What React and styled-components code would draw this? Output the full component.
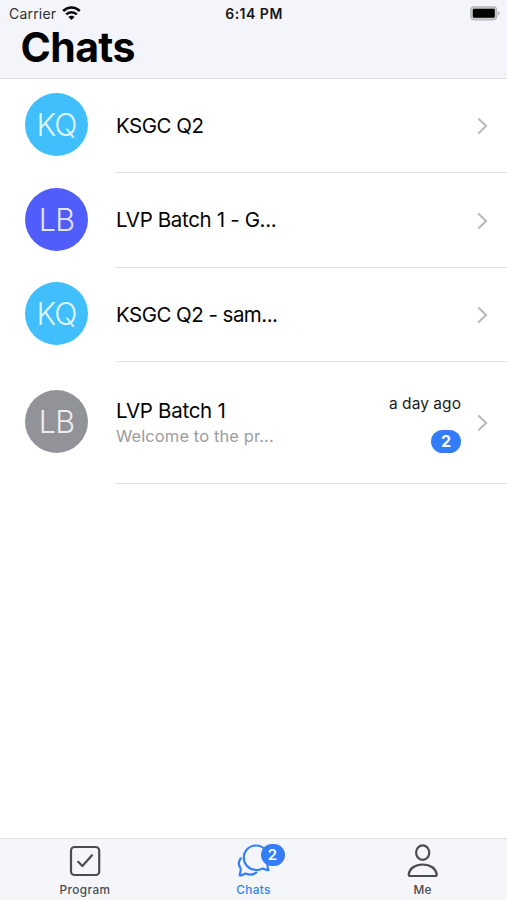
import React from "react";
import styled, { createGlobalStyle } from "styled-components";

const GlobalStyle = createGlobalStyle`
  * { box-sizing: border-box; }
  body { margin: 0; background: #fff; }
`;

const Screen = styled.div`
  width: 507px;
  height: 900px;
  display: flex;
  flex-direction: column;
  overflow: hidden;
  background: #fff;
  color: #050505;
  font-family: Inter, "Liberation Sans", sans-serif;
  white-space: nowrap;
`;

const Header = styled.header`
  height: 79px;
  flex: none;
  background: #f4f5fa;
  border-bottom: 1px solid #dddee2;
`;

const StatusBar = styled.div`
  height: 27px;
  padding: 0 7px 0 9px;
  display: grid;
  grid-template-columns: 1fr auto 1fr;
  align-items: center;
  line-height: 27px;
`;

const Carrier = styled.div`
  display: flex;
  align-items: center;
  gap: 6px;
  font-size: 14px;
  letter-spacing: 0.2px;
  color: #303135;
`;

const Clock = styled.div`
  font-size: 14px;
  font-weight: 600;
  letter-spacing: 0.5px;
  margin-right: 1px;
  color: #161719;
`;

const Battery = styled.svg`
  display: block;
  justify-self: end;
`;

const Title = styled.h1`
  margin: 0;
  padding-left: 20.5px;
  font-size: 41px;
  font-weight: 700;
  line-height: 40px;
  letter-spacing: -0.6px;
  color: #000;
`;

const List = styled.main`
  flex: 1;
`;

const Row = styled.div`
  height: ${(p) => p.$height}px;
  padding-left: 25px;
  display: flex;
  align-items: stretch;
`;

const Avatar = styled.div`
  width: 63px;
  height: 63px;
  flex: none;
  margin: ${(p) => p.$top}px 28px 0 0;
  border-radius: 50%;
  background: ${(p) => p.$color};
  color: rgba(255, 255, 255, 0.86);
  font-size: 30.5px;
  font-weight: 300;
  line-height: 64px;
  letter-spacing: -0.8px;
  text-align: center;
`;

const Body = styled.div`
  flex: 1;
  display: flex;
  align-items: center;
  padding-right: 18px;
  border-bottom: 1px solid #e4e4e5;
`;

const Texts = styled.div`
  flex: 1;
  margin-top: ${(p) => p.$shift}px;
`;

const Name = styled.div`
  font-size: 20.5px;
  line-height: 26px;
  letter-spacing: ${(p) => p.$tracking}px;
`;

const Preview = styled.div`
  font-size: 16.5px;
  line-height: 25px;
  letter-spacing: 0.1px;
  color: #9c9c9e;
`;

const Meta = styled.div`
  display: flex;
  flex-direction: column;
  align-items: flex-end;
  gap: 16px;
  margin: 2px 16px 0 0;
`;

const Time = styled.div`
  font-size: 15.5px;
  line-height: 20px;
  letter-spacing: 0.05px;
  color: #1b1b1c;
`;

const Count = styled.div`
  width: 30px;
  height: 23px;
  border-radius: 12px;
  background: #337dfb;
  color: #fff;
  font-size: 16px;
  font-weight: 700;
  line-height: 23px;
  text-align: center;
`;

const Chevron = styled.svg`
  display: block;
  margin-top: ${(p) => p.$shift}px;
`;

const TabBar = styled.nav`
  height: 62px;
  flex: none;
  display: grid;
  grid-template-columns: repeat(3, 1fr);
  background: #f4f6fa;
  border-top: 1px solid #dfe0e3;
`;

const Tab = styled.div`
  display: flex;
  flex-direction: column;
  align-items: center;
  color: ${(p) => (p.$active ? "#347ff9" : "#4b4c4f")};
`;

const TabIcon = styled.div`
  position: relative;
  height: 43px;
  padding-top: 4px;
  svg { display: block; }
`;

const TabLabel = styled.div`
  font-size: 11.8px;
  font-weight: 500;
  line-height: 16px;
  letter-spacing: ${(p) => p.$tracking}px;
  padding-left: ${(p) => p.$indent || 0}px;
`;

const TabBadge = styled.div`
  position: absolute;
  top: 5px;
  left: 24px;
  width: 24px;
  height: 22px;
  border-radius: 11px;
  background: #337dfb;
  color: #fff;
  font-size: 15px;
  font-weight: 600;
  line-height: 22px;
  text-align: center;
`;

const chats = [
  { initials: "KQ", color: "#40bffc", name: "KSGC Q2", height: 94, top: 14, tracking: -0.5 },
  { initials: "LB", color: "#505dfb", name: "LVP Batch 1 - G...", height: 95, top: 14.5, tracking: -0.35 },
  { initials: "KQ", color: "#40bffc", name: "KSGC Q2 - sam...", height: 94, top: 14, tracking: -0.53 },
  {
    initials: "LB", color: "#929299", name: "LVP Batch 1", height: 122, top: 28, tracking: -0.28,
    preview: "Welcome to the pr...", time: "a day ago", count: 2,
  },
];

function WifiIcon() {
  return (
    <svg width="19" height="15" viewBox="0 0 19 15" fill="none" stroke="#08090a" strokeWidth="2.5">
      <path d="M1.2 5C5.8.4 13.2.4 17.8 5" />
      <path d="M4.2 8.4C7.1 5.5 11.9 5.5 14.8 8.4" />
      <path d="M6.4 11C8.1 9.2 10.9 9.2 12.6 11L9.5 14.1Z" fill="#08090a" stroke="none" />
    </svg>
  );
}

function ProgramIcon() {
  return (
    <svg width="32" height="34" viewBox="0 0 32 34" fill="none" stroke="currentColor" strokeWidth="2.2" strokeLinecap="round" strokeLinejoin="round">
      <rect x="2" y="4" width="28.2" height="28" rx="3.6" />
      <path d="M9.2 18.8 13.4 23 23 12.2" />
    </svg>
  );
}

function ChatsIcon() {
  return (
    <svg width="34" height="36" viewBox="0 0.7 34 36" fill="none" stroke="currentColor" strokeWidth="2.2" strokeLinecap="round" strokeLinejoin="round">
      <path d="M30.5 19.5C31 22 29.8 24.6 31.4 27.8C28.4 28.2 27.1 25.8 25 26.3C22.8 27.5 20.5 28 18.2 27.6C11.6 27.2 6.8 21.9 6.8 15.4C6.8 8.6 12.2 3.2 19 3.2C25.8 3.2 31 8.6 31 15.4C31 16.8 30.9 18.2 30.5 19.5Z" />
      <path d="M3.8 16C1.5 18.8 1.4 22.8 3.5 26.1C4.3 28.2 3 29.7 2.7 33.2C5.6 33.5 7.2 30.8 9.3 31.4C12.8 32.9 16.9 32 19.2 30.4" />
    </svg>
  );
}

function PersonIcon() {
  return (
    <svg width="32" height="35" viewBox="0 0 32 35" fill="none" stroke="currentColor" strokeWidth="2.2" strokeLinejoin="round">
      <ellipse cx="15.7" cy="9.6" rx="6.6" ry="7.2" />
      <path d="M3.1 33C2.1 33 1.6 32.3 1.7 31.4C2.5 25.5 7.9 21.5 15.7 21.5S28.9 25.5 29.7 31.4C29.8 32.3 29.3 33 28.3 33Z" />
    </svg>
  );
}

function ChatRow({ chat }) {
  return (
    <Row $height={chat.height}>
      <Avatar $color={chat.color} $top={chat.top}>{chat.initials}</Avatar>
      <Body>
        <Texts $shift={chat.preview ? 2 : 0}>
          <Name $tracking={chat.tracking}>{chat.name}</Name>
          {chat.preview && <Preview>{chat.preview}</Preview>}
        </Texts>
        {chat.time && (
          <Meta>
            <Time>{chat.time}</Time>
            <Count>{chat.count}</Count>
          </Meta>
        )}
        <Chevron $shift={chat.preview ? 0 : 1} width="12" height="18" viewBox="0 0 12 18" fill="none" stroke="#bababd" strokeWidth="2.1">
          <path d="M1.3 1.5 9.1 9 1.3 16.5" />
        </Chevron>
      </Body>
    </Row>
  );
}

export default function App() {
  return (
    <Screen>
      <GlobalStyle />
      <Header>
        <StatusBar>
          <Carrier>Carrier <WifiIcon /></Carrier>
          <Clock>6:14 PM</Clock>
          <Battery width="30" height="15" viewBox="0 0 30 15">
            <rect x=".8" y=".8" width="26" height="13" rx="3.5" fill="#c9cacc" stroke="#b4b5b7" strokeWidth="1.2" />
            <rect x="2.8" y="2.8" width="22" height="9" rx="1.2" fill="#000" />
            <path d="M28.2 5.2C30.2 6 30.2 8.6 28.2 9.4Z" fill="#a3a4a8" />
          </Battery>
        </StatusBar>
        <Title>Chats</Title>
      </Header>
      <List>
        {chats.map((chat) => <ChatRow key={chat.name} chat={chat} />)}
      </List>
      <TabBar>
        <Tab>
          <TabIcon><ProgramIcon /></TabIcon>
          <TabLabel $tracking={0.4} $indent={1}>Program</TabLabel>
        </Tab>
        <Tab $active>
          <TabIcon>
            <ChatsIcon />
            <TabBadge>2</TabBadge>
          </TabIcon>
          <TabLabel $tracking={0.4}>Chats</TabLabel>
        </Tab>
        <Tab>
          <TabIcon><PersonIcon /></TabIcon>
          <TabLabel $tracking={0.2}>Me</TabLabel>
        </Tab>
      </TabBar>
    </Screen>
  );
}
